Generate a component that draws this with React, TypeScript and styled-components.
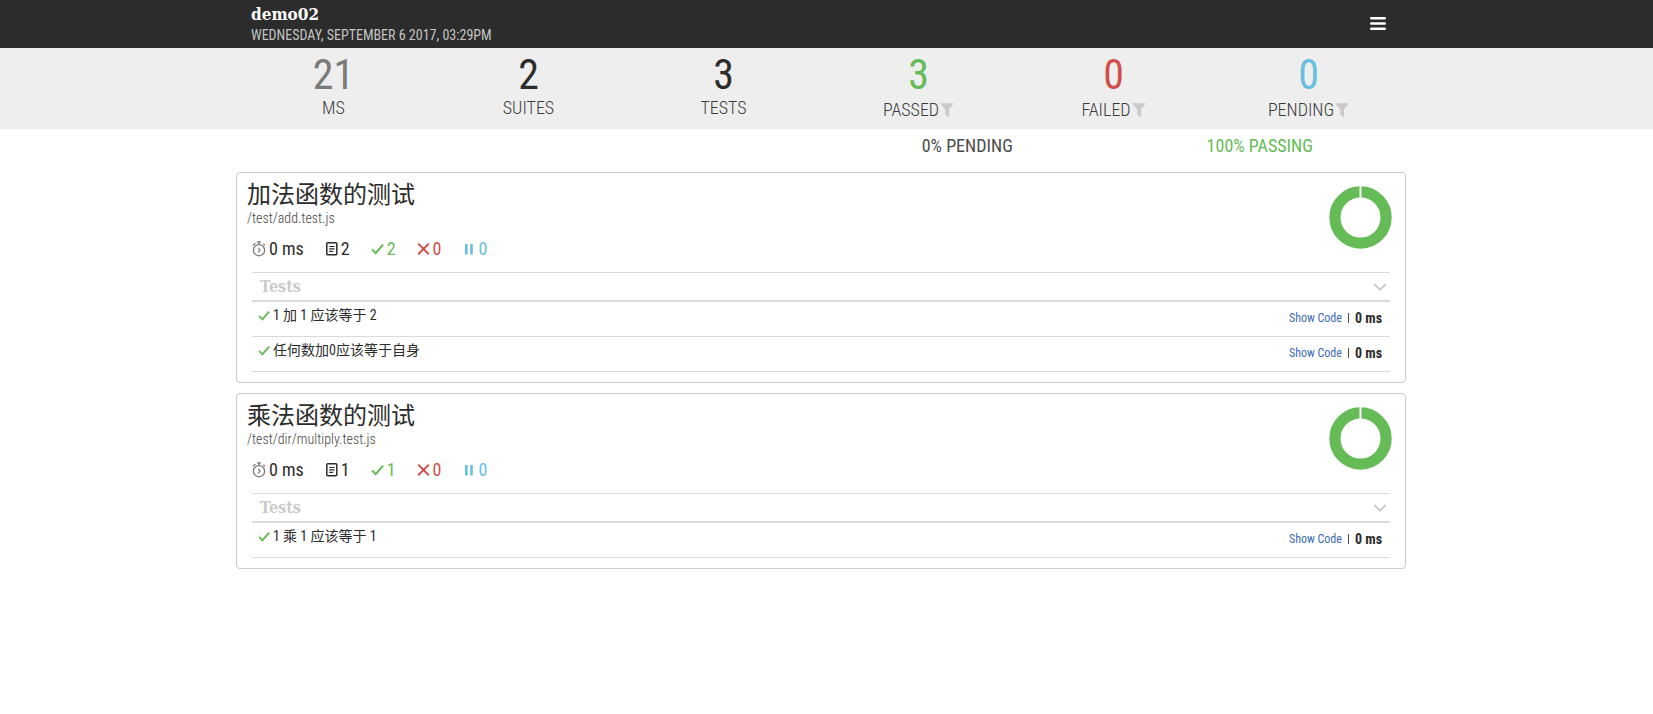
import React from "react";
import styled, { createGlobalStyle, css } from "styled-components";

const sans = '"Roboto Condensed", "Noto Sans CJK SC", sans-serif';
const slab = '"Roboto Slab", "DejaVu Serif Condensed", serif';

const color = {
  text: "#2c2c2c",
  label: "#4c4c4c",
  muted: "#7a7a7a",
  faint: "#cacaca",
  line: "#dadada",
  green: "#65bb56",
  red: "#d14f4a",
  blue: "#66bfdf",
  link: "#3d6cb3",
};

const GlobalStyle = createGlobalStyle`
  *, *::before, *::after { box-sizing: border-box; }
  body { margin: 0; background: #fff; color: ${color.text}; font: 400 14px/20px ${sans}; }
  h1, h2, h3, p, ul { margin: 0; padding: 0; }
  ul { list-style: none; }
  svg { display: block; flex: none; }
`;

const buttonReset = css`
  border: 0;
  padding: 0;
  background: none;
  font: inherit;
  color: inherit;
  cursor: pointer;
`;

const Container = styled.div`
  max-width: 1170px;
  margin: 0 auto;
`;

const gutter = css`
  padding-right: 11px;
`;

const Header = styled.header`
  ${gutter}
  background: #2c2c2c;
`;

const HeaderInner = styled(Container)`
  display: flex;
  align-items: center;
  justify-content: space-between;
  height: 48px;
  padding: 0 5px 0 15px;
`;

const ReportTitle = styled.h1`
  font: 700 17px/22px ${slab};
  color: #fff;
`;

const ReportDate = styled.p`
  font-size: 14px;
  line-height: 20px;
  color: #c4c4c4;
  text-transform: uppercase;
`;

const MenuButton = styled.button`
  ${buttonReset}
  padding: 8px 15px;
`;

const Band = styled.section`
  ${gutter}
  background: #eee;
`;

const Totals = styled(Container)`
  display: grid;
  grid-template-columns: repeat(6, 1fr);
  height: 81px;
  padding-top: 6px;
  text-align: center;
`;

const Total = styled.div`
  display: flex;
  flex-direction: column;
  align-items: center;
`;

const TotalNumber = styled.strong<{ $color: string }>`
  font-size: 42px;
  font-weight: 400;
  line-height: 42px;
  color: ${(p) => p.$color};
`;

const totalLabel = css`
  font-size: 18px;
  font-weight: 300;
  line-height: 24px;
  text-transform: uppercase;
  color: #3c3c3c;
`;

const TotalLabel = styled.span`
  ${totalLabel}
`;

const FilterButton = styled.button`
  ${buttonReset}
  ${totalLabel}
  display: flex;
  align-items: center;
  gap: 1px;
  margin-top: 2px;
  svg { color: ${color.faint}; }
`;

const Main = styled.main`
  ${gutter}
`;

const Rates = styled(Container)`
  display: grid;
  grid-template-columns: 25% 25%;
  justify-content: end;
  padding: 5px 0 14px;
  font-size: 18px;
  line-height: 24px;
  text-align: center;
`;

const Rate = styled.span<{ $color: string }>`
  color: ${(p) => p.$color};
`;

const Suites = styled(Container)`
  display: grid;
  gap: 10px;
`;

const Card = styled.section`
  border: 1px solid ${color.faint};
  border-radius: 4px;
  padding-bottom: 10px;
`;

const CardTop = styled.div`
  display: flex;
  justify-content: space-between;
  padding: 6px 13px 0 10px;
`;

const SuiteTitle = styled.h2`
  font-size: 24px;
  font-weight: 400;
  line-height: 32px;
`;

const SuiteFile = styled.p`
  font-weight: 300;
  line-height: 14px;
  color: #444;
`;

const Summary = styled.ul`
  display: flex;
  gap: 22px;
  padding: 12px 5px 11px;
  font-size: 18px;
  line-height: 24px;
`;

const SummaryItem = styled.li<{ $color: string }>`
  display: flex;
  align-items: center;
  gap: 3px;
  color: ${(p) => p.$color};
`;

const Ring = styled.div`
  padding-top: 6px;
`;

const TestGroup = styled.div`
  margin: 0 15px;
  border-top: 1px solid ${color.line};
`;

const GroupToggle = styled.button`
  ${buttonReset}
  display: flex;
  align-items: center;
  justify-content: space-between;
  width: 100%;
  height: 29px;
  padding: 0 3px 0 8px;
  border-bottom: 2px solid ${color.line};
  color: ${color.faint};
  font: 700 16px/24px ${slab};
`;

const TestRow = styled.li`
  display: flex;
  align-items: center;
  justify-content: space-between;
  height: 35px;
  padding: 0 8px 2px 7px;
  border-bottom: 1px solid ${color.line};
`;

const TestName = styled.span`
  display: flex;
  align-items: center;
  gap: 3px;
  padding-bottom: 6px;
`;

const TestMeta = styled.span`
  display: flex;
  align-items: center;
`;

const CodeButton = styled.button`
  ${buttonReset}
  font-size: 12px;
  color: ${color.link};
`;

const Divider = styled.span`
  width: 1px;
  height: 10px;
  margin: 0 6px;
  background: ${color.label};
`;

const MenuIcon = () => (
  <svg width="16" height="14" viewBox="0 0 16 14" fill="none" stroke="#fff" strokeWidth="2.4" strokeLinecap="round" aria-hidden>
    <path d="M1.2 1.2h13.6M1.2 6.5h13.6M1.2 11.8h13.6" />
  </svg>
);

const FilterIcon = () => (
  <svg width="14" height="15" viewBox="0 0 14 15" fill="currentColor" aria-hidden>
    <path d="M0 .2h14L9 6.2v8.4L5.2 11.6V6.2z" />
  </svg>
);

const StopwatchIcon = () => (
  <svg width="14" height="16" viewBox="0 0 14 16" fill="none" stroke={color.muted} strokeWidth="1.3" aria-hidden>
    <circle cx="7" cy="9.2" r="5.6" />
    <path d="M5.2 1h3.6M7 1v2.6M1 4.2l2.4-2M11.3 2.8l1.6 1.6M6.2 6.8l1.8 2.4-1.8 2.2" />
  </svg>
);

const DocumentIcon = () => (
  <svg width="12" height="14" viewBox="0 0 12 14" fill="none" stroke="currentColor" aria-hidden>
    <rect x=".8" y=".8" width="10" height="12" rx="1" strokeWidth="1.5" />
    <path d="M3.2 4.5h5.4M3.2 6.9h5.4M3.2 9.4h4" strokeWidth="1.1" />
  </svg>
);

const CheckIcon = ({ size = 12 }: { size?: number }) => (
  <svg width={size} height={size} viewBox="0 0 13 13" fill="none" stroke={color.green} strokeWidth="2.2" overflow="visible" aria-hidden>
    <path d="M.2 7l3.8 4L12 1.8" />
  </svg>
);

const CrossIcon = () => (
  <svg width="12" height="12" viewBox="0 0 12 12" fill="none" stroke="currentColor" strokeWidth="2" overflow="visible" aria-hidden>
    <path d="M.2.6l10.6 10.6M10.8.6L.2 11.2" />
  </svg>
);

const PauseIcon = () => (
  <svg width="12" height="12" viewBox="0 0 12 12" fill="currentColor" aria-hidden>
    <path d="M2 1h2.6v10.6H2zM7.2 1h2.6v10.6H7.2z" />
  </svg>
);

const ChevronIcon = () => (
  <svg width="14" height="10" viewBox="0 0 14 10" fill="none" stroke="currentColor" strokeWidth="1.9" aria-hidden>
    <path d="M1.3 2L7 7.7 12.7 2" />
  </svg>
);

const RingChart = () => (
  <svg width="64" height="64" viewBox="0 0 64 64" role="img" aria-label="100% passing">
    <circle cx="32.5" cy="32.5" r="25.6" fill="none" stroke={color.green} strokeWidth="11.2" />
    <path d="M32.5 0v13.9" stroke="#fff" strokeWidth="2" />
  </svg>
);

type Suite = { title: string; file: string; tests: string[] };

const suites: Suite[] = [
  { title: "加法函数的测试", file: "/test/add.test.js", tests: ["1 加 1 应该等于 2", "任何数加0应该等于自身"] },
  { title: "乘法函数的测试", file: "/test/dir/multiply.test.js", tests: ["1 乘 1 应该等于 1"] },
];

const totals = [
  { value: 21, label: "ms", color: color.muted },
  { value: 2, label: "Suites", color: color.text },
  { value: 3, label: "Tests", color: color.text },
  { value: 3, label: "Passed", color: color.green, filter: true },
  { value: 0, label: "Failed", color: color.red, filter: true },
  { value: 0, label: "Pending", color: color.blue, filter: true },
];

const SuiteCard = ({ title, file, tests }: Suite) => (
  <Card>
    <CardTop>
      <div>
        <SuiteTitle>{title}</SuiteTitle>
        <SuiteFile>{file}</SuiteFile>
        <Summary>
          <SummaryItem $color={color.text}><StopwatchIcon />0 ms</SummaryItem>
          <SummaryItem $color={color.text}><DocumentIcon />{tests.length}</SummaryItem>
          <SummaryItem $color={color.green}><CheckIcon />{tests.length}</SummaryItem>
          <SummaryItem $color={color.red}><CrossIcon />0</SummaryItem>
          <SummaryItem $color={color.blue}><PauseIcon />0</SummaryItem>
        </Summary>
      </div>
      <Ring><RingChart /></Ring>
    </CardTop>
    <TestGroup>
      <h3><GroupToggle type="button">Tests<ChevronIcon /></GroupToggle></h3>
      <ul>
        {tests.map((name) => (
          <TestRow key={name}>
            <TestName><CheckIcon size={11} />{name}</TestName>
            <TestMeta>
              <CodeButton type="button">Show Code</CodeButton>
              <Divider />
              <b>0 ms</b>
            </TestMeta>
          </TestRow>
        ))}
      </ul>
    </TestGroup>
  </Card>
);

export default function App() {
  return (
    <>
      <GlobalStyle />
      <Header>
        <HeaderInner>
          <div>
            <ReportTitle>demo02</ReportTitle>
            <ReportDate>Wednesday, September 6 2017, 03:29pm</ReportDate>
          </div>
          <MenuButton type="button" aria-label="Menu"><MenuIcon /></MenuButton>
        </HeaderInner>
      </Header>
      <Band>
        <Totals>
          {totals.map((t) => (
            <Total key={t.label}>
              <TotalNumber $color={t.color}>{t.value}</TotalNumber>
              {t.filter ? (
                <FilterButton type="button">{t.label}<FilterIcon /></FilterButton>
              ) : (
                <TotalLabel>{t.label}</TotalLabel>
              )}
            </Total>
          ))}
        </Totals>
      </Band>
      <Main>
        <Rates>
          <Rate $color={color.label}>0% PENDING</Rate>
          <Rate $color={color.green}>100% PASSING</Rate>
        </Rates>
        <Suites>
          {suites.map((s) => <SuiteCard key={s.file} {...s} />)}
        </Suites>
      </Main>
    </>
  );
}
